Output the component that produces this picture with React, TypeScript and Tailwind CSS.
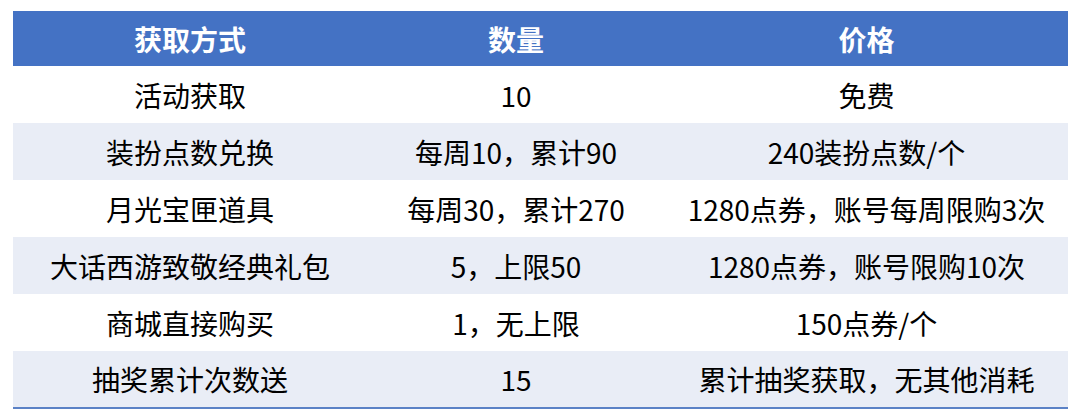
const rows = [
  ['活动获取', '10', '免费'],
  ['装扮点数兑换', '每周10，累计90', '240装扮点数/个'],
  ['月光宝匣道具', '每周30，累计270', '1280点券，账号每周限购3次'],
  ['大话西游致敬经典礼包', '5，上限50', '1280点券，账号限购10次'],
  ['商城直接购买', '1，无上限', '150点券/个'],
  ['抽奖累计次数送', '15', '累计抽奖获取，无其他消耗'],
]

export default function App() {
  return (
    <div className="w-[1080px] h-[420px] bg-white pt-[11px] pl-[13px] font-['Microsoft_YaHei','Noto_Sans_CJK_SC',sans-serif]">
      <table className="w-[1055px] border-collapse table-fixed text-[28px] text-black">
        <colgroup>
          <col className="w-[354px]" />
          <col className="w-[298px]" />
          <col className="w-[403px]" />
        </colgroup>
        <thead>
          <tr className="h-[55px] bg-[#4472c4] text-white font-bold">
            <th className="p-0 text-center leading-none">获取方式</th>
            <th className="p-0 text-center leading-none">数量</th>
            <th className="p-0 text-center leading-none">价格</th>
          </tr>
        </thead>
        <tbody className="border-b-2 border-[#5b82c6]">
          {rows.map((r, i) => (
            <tr key={i} className={`h-[57px] ${i % 2 === 1 ? 'bg-[#e9edf6]' : 'bg-white'}`}>
              {r.map((c, j) => (
                <td key={j} className="p-0 text-center leading-none">{c}</td>
              ))}
            </tr>
          ))}
        </tbody>
      </table>
    </div>
  )
}
